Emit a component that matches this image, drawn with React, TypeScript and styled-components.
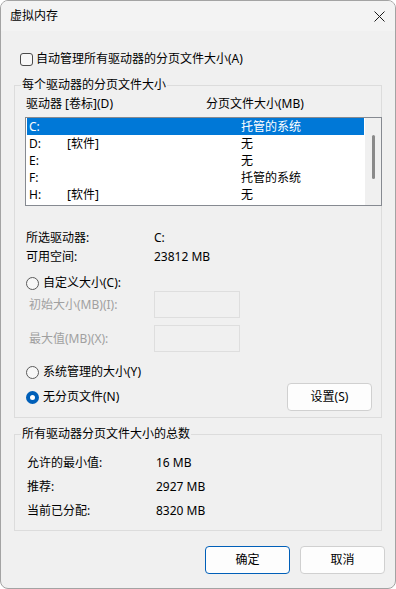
import React from "react";
import styled, { createGlobalStyle } from "styled-components";

const GlobalStyle = createGlobalStyle`
  html, body {
    margin: 0;
    padding: 0;
    background: #ffffff;
  }
  * {
    box-sizing: border-box;
  }
`;

const Window = styled.div`
  width: 396px;
  height: 589px;
  display: flex;
  flex-direction: column;
  border: 1px solid #a3a3a3;
  border-radius: 8px;
  overflow: hidden;
  background: #f0f0f0;
  color: #000;
  font-family: "Noto Sans", "Noto Sans CJK SC", sans-serif;
  font-size: 12px;
  line-height: 16px;
`;

const TitleBar = styled.div`
  height: 30px;
  flex: none;
  display: flex;
  align-items: center;
  justify-content: space-between;
  padding: 0 10px 0 9px;
  background: #f3f3f3;
`;

const TitleText = styled.span`
  font-size: 12px;
`;

const Body = styled.div`
  flex: 1;
  display: flex;
  flex-direction: column;
  padding: 20px 13px 0 13px;
`;

const CheckRow = styled.label`
  display: flex;
  align-items: center;
  gap: 3px;
  padding-left: 6px;
  height: 16px;
`;

const CheckBox = styled.span`
  width: 13px;
  height: 13px;
  border: 1px solid #4a4a4a;
  border-radius: 3px;
  background: #f7f7f7;
  flex: none;
`;

const Group = styled.fieldset<{ $top: number; $bottom: number }>`
  margin: ${(p) => p.$top}px 0 0 0;
  padding: 0 0 ${(p) => p.$bottom}px 10px;
  border: 1px solid #dcdcdc;
  min-width: 0;
`;

const Legend = styled.legend`
  margin-left: -4px;
  padding: 0 1px;
  line-height: 16px;
`;

const HeaderRow = styled.div`
  display: grid;
  grid-template-columns: 180px 1fr;
  padding: 3px 0 0 1px;
  height: 19px;
`;

const ListBox = styled.div`
  margin: 5px -1px 0 0;
  height: 89px;
  display: flex;
  border: 1px solid #868a91;
  background: #ffffff;
`;

const Rows = styled.div`
  flex: 1;
  padding: 0 1px;
`;

const DriveRow = styled.div<{ $selected?: boolean }>`
  display: grid;
  grid-template-columns: 38px 174px 1fr;
  height: 17px;
  align-items: center;
  padding-left: 2px;
  background: ${(p) => (p.$selected ? "#0078d7" : "transparent")};
  color: ${(p) => (p.$selected ? "#ffffff" : "#000000")};
`;

const ScrollTrack = styled.div`
  width: 16px;
  flex: none;
  background: #f0f0f0;
  display: flex;
  justify-content: center;
  padding-top: 17px;
`;

const ScrollThumb = styled.div`
  width: 3px;
  height: 44px;
  border-radius: 2px;
  background: #8a8a8a;
`;

const InfoGrid = styled.div<{ $top: number; $col: number; $gap: number; $pad: number }>`
  display: grid;
  grid-template-columns: ${(p) => p.$col}px 1fr;
  row-gap: ${(p) => p.$gap}px;
  margin-top: ${(p) => p.$top}px;
  padding-left: ${(p) => p.$pad}px;
`;

const RadioRow = styled.div<{ $top: number }>`
  display: flex;
  align-items: center;
  justify-content: space-between;
  margin-top: ${(p) => p.$top}px;
  padding: 0 9px 0 1px;
  min-height: 16px;
`;

const RadioLabel = styled.label`
  display: flex;
  align-items: center;
  gap: 4px;
`;

const Radio = styled.span<{ $checked?: boolean }>`
  width: 13px;
  height: 13px;
  border-radius: 50%;
  flex: none;
  border: ${(p) => (p.$checked ? "4px solid #005fb8" : "1px solid #5a5a5a")};
  background: ${(p) => (p.$checked ? "#ffffff" : "#f7f7f7")};
`;

const FieldRow = styled.div<{ $top: number }>`
  display: grid;
  grid-template-columns: 125px 86px;
  align-items: center;
  margin-top: ${(p) => p.$top}px;
  padding-left: 4px;
  color: #a0a0a0;
`;

const Field = styled.div`
  height: 27px;
  border: 1px solid #dedede;
  background: #f0f0f0;
`;

const Button = styled.button<{ $primary?: boolean }>`
  width: 85px;
  height: 28px;
  font: inherit;
  color: #000;
  background: #fdfdfd;
  border: 1px solid ${(p) => (p.$primary ? "#005fb8" : "#d0d0d0")};
  border-radius: 4px;
  padding: 0;
`;

const Footer = styled.div`
  display: flex;
  justify-content: flex-end;
  gap: 10px;
  margin: 15px -3px 0 0;
`;

const drives = [
  { letter: "C:", label: "", size: "托管的系统" },
  { letter: "D:", label: "[软件]", size: "无" },
  { letter: "E:", label: "", size: "无" },
  { letter: "F:", label: "", size: "托管的系统" },
  { letter: "H:", label: "[软件]", size: "无" },
];

const CloseIcon = () => (
  <svg width="11" height="11" viewBox="0 0 11 11">
    <path d="M0.5 0.5 L10.5 10.5 M10.5 0.5 L0.5 10.5" stroke="#1a1a1a" strokeWidth="1" fill="none" />
  </svg>
);

export default function App() {
  return (
    <>
      <GlobalStyle />
      <Window>
        <TitleBar>
          <TitleText>虚拟内存</TitleText>
          <CloseIcon />
        </TitleBar>
        <Body>
          <CheckRow>
            <CheckBox />
            自动管理所有驱动器的分页文件大小(A)
          </CheckRow>

          <Group $top={10} $bottom={6}>
            <Legend>每个驱动器的分页文件大小</Legend>
            <HeaderRow>
              <span>驱动器 [卷标](D)</span>
              <span>分页文件大小(MB)</span>
            </HeaderRow>
            <ListBox>
              <Rows>
                {drives.map((d, i) => (
                  <DriveRow key={d.letter} $selected={i === 0}>
                    <span>{d.letter}</span>
                    <span>{d.label}</span>
                    <span>{d.size}</span>
                  </DriveRow>
                ))}
              </Rows>
              <ScrollTrack>
                <ScrollThumb />
              </ScrollTrack>
            </ListBox>

            <InfoGrid $top={24} $col={128} $gap={3} $pad={1}>
              <span>所选驱动器:</span>
              <span>C:</span>
              <span>可用空间:</span>
              <span>23812 MB</span>
            </InfoGrid>

            <RadioRow $top={10}>
              <RadioLabel>
                <Radio />
                自定义大小(C):
              </RadioLabel>
            </RadioRow>
            <FieldRow $top={0}>
              <span>初始大小(MB)(I):</span>
              <Field />
            </FieldRow>
            <FieldRow $top={7}>
              <span>最大值(MB)(X):</span>
              <Field />
            </FieldRow>

            <RadioRow $top={12}>
              <RadioLabel>
                <Radio />
                系统管理的大小(Y)
              </RadioLabel>
            </RadioRow>
            <RadioRow $top={3}>
              <RadioLabel>
                <Radio $checked />
                无分页文件(N)
              </RadioLabel>
              <Button>设置(S)</Button>
            </RadioRow>
          </Group>

          <Group $top={8} $bottom={11}>
            <Legend>所有驱动器分页文件大小的总数</Legend>
            <InfoGrid $top={13} $col={129} $gap={8} $pad={2}>
              <span>允许的最小值:</span>
              <span>16 MB</span>
              <span>推荐:</span>
              <span>2927 MB</span>
              <span>当前已分配:</span>
              <span>8320 MB</span>
            </InfoGrid>
          </Group>

          <Footer>
            <Button $primary>确定</Button>
            <Button>取消</Button>
          </Footer>
        </Body>
      </Window>
    </>
  );
}
